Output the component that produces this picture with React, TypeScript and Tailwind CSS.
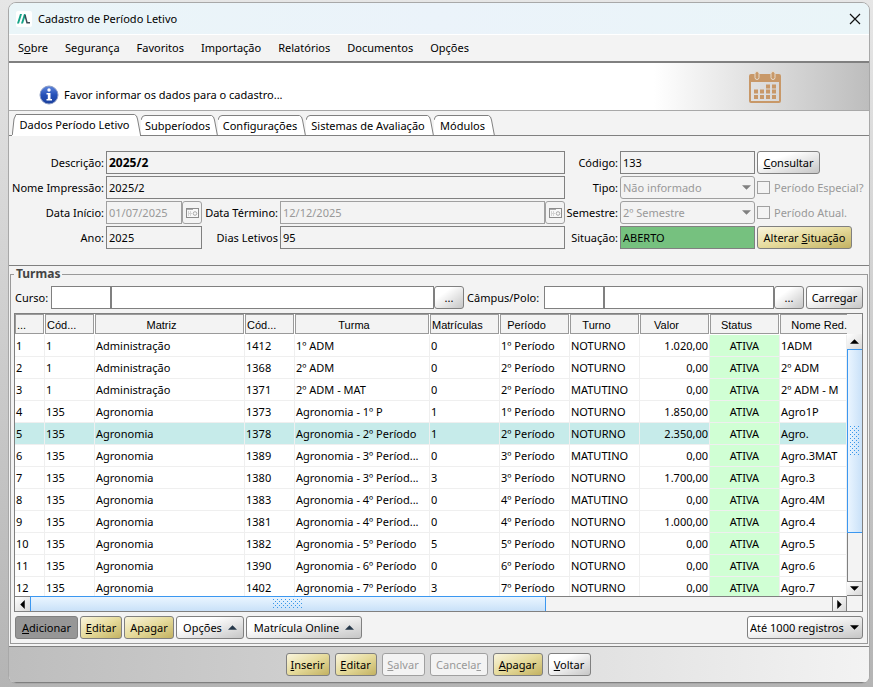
import type { ReactNode } from "react"
import clsx from "clsx"

const menus = ["Sobre", "Segurança", "Favoritos", "Importação", "Relatórios", "Documentos", "Opções"]

const tabs = [
  { label: "Dados Período Letivo", width: "w-[129px]" },
  { label: "Subperíodos", width: "w-[77px]" },
  { label: "Configurações", width: "w-[88px]" },
  { label: "Sistemas de Avaliação", width: "w-[128px]" },
  { label: "Módulos", width: "w-[61px]" },
]

const columns = [
  { title: "...", width: "w-[30px]", left: true },
  { title: "Cód...", width: "w-[50px]", left: true },
  { title: "Matriz", width: "w-[150px]" },
  { title: "Cód...", width: "w-[50px]", left: true },
  { title: "Turma", width: "w-[135px]" },
  { title: "Matrículas", width: "w-[70px]", left: true },
  { title: "Período", width: "w-[70px]" },
  { title: "Turno", width: "w-[70px]" },
  { title: "Valor", width: "w-[70px]" },
  { title: "Status", width: "w-[70px]" },
]

const turmas = [
  ["1", "Administração", "1412", "1º ADM", "0", "1º Período", "NOTURNO", "1.020,00", "1ADM"],
  ["1", "Administração", "1368", "2º ADM", "0", "2º Período", "NOTURNO", "0,00", "2º ADM"],
  ["1", "Administração", "1371", "2º ADM - MAT", "0", "2º Período", "MATUTINO", "0,00", "2º ADM - M"],
  ["135", "Agronomia", "1373", "Agronomia - 1º P", "1", "1º Período", "NOTURNO", "1.850,00", "Agro1P"],
  ["135", "Agronomia", "1378", "Agronomia - 2º Período", "1", "2º Período", "NOTURNO", "2.350,00", "Agro."],
  ["135", "Agronomia", "1389", "Agronomia - 3º Períod...", "0", "3º Período", "MATUTINO", "0,00", "Agro.3MAT"],
  ["135", "Agronomia", "1380", "Agronomia - 3º Períod...", "3", "3º Período", "NOTURNO", "1.700,00", "Agro.3"],
  ["135", "Agronomia", "1383", "Agronomia - 4º Períod...", "0", "4º Período", "MATUTINO", "0,00", "Agro.4M"],
  ["135", "Agronomia", "1381", "Agronomia - 4º Períod...", "0", "4º Período", "NOTURNO", "1.000,00", "Agro.4"],
  ["135", "Agronomia", "1382", "Agronomia - 5º Período", "5", "5º Período", "NOTURNO", "0,00", "Agro.5"],
  ["135", "Agronomia", "1390", "Agronomia - 6º Período", "0", "6º Período", "NOTURNO", "0,00", "Agro.6"],
  ["135", "Agronomia", "1402", "Agronomia - 7º Período", "3", "7º Período", "NOTURNO", "0,00", "Agro.7"],
]

const SELECTED = 4

const tones = {
  plain: "border-[#808080] bg-linear-to-br from-white from-30% to-[#c6c6c6]",
  gold: "border-[#808080] bg-linear-to-br from-[#f9f4dc] via-[#e6db9c] to-[#c3b261]",
  pressed: "border-[#808080] bg-[#969696]",
  off: "border-[#a0a0a0] bg-[#f3f3f3] text-[#999]",
}

const field = "h-[23px] w-full min-w-0 border border-[#808080] px-0.5 outline-none"

function Btn({ tone = "plain", width, disabled, children, label }: {
  tone?: keyof typeof tones
  width: string
  disabled?: boolean
  children: ReactNode
  label?: string
}) {
  return (
    <button
      type="button"
      disabled={disabled}
      aria-label={label}
      className={clsx("flex h-[23px] shrink-0 items-center justify-center whitespace-nowrap rounded-[3px] border", tones[tone], width)}
    >
      {children}
    </button>
  )
}

function Label({ id, children }: { id: string; children: ReactNode }) {
  return <label htmlFor={id} className="flex justify-end whitespace-nowrap">{children}</label>
}

function Arrow({ dir = "down", className = "text-black" }: { dir?: "up" | "down" | "left" | "right"; className?: string }) {
  const paths = { up: "M0 5L5 0L10 5Z", down: "M0 0H10L5 5Z", left: "M5 0V10L0 5Z", right: "M0 0V10L5 5Z" }
  const flat = dir === "up" || dir === "down"
  return (
    <svg className={clsx("shrink-0", className)} width={flat ? 9 : 5} height={flat ? 5 : 9} viewBox={flat ? "0 0 10 5" : "0 0 5 10"} fill="currentColor">
      <path d={paths[dir]} />
    </svg>
  )
}

// disabled combo box
function Combo({ id, value }: { id: string; value: string }) {
  return (
    <div className="relative">
      <select id={id} disabled className="h-[23px] w-full appearance-none rounded-[3px] border border-[#a0a0a0] bg-[#f3f3f3] px-0.5 text-[#999] opacity-100">
        <option>{value}</option>
      </select>
      <span className="pointer-events-none absolute inset-y-0 right-1 flex items-center"><Arrow className="text-[#808080]" /></span>
    </div>
  )
}

function DateField({ id, value }: { id: string; value: string }) {
  return (
    <div className="flex">
      <input id={id} disabled defaultValue={value} className="h-[23px] w-full min-w-0 flex-1 border border-[#a0a0a0] px-0.5 text-[#999]" />
      <Btn tone="off" disabled width="w-5" label="Abrir calendário">
        <svg width="13" height="10" viewBox="0 0 13 10" fill="none" stroke="#8c8c8c">
          <rect x="0.5" y="0.5" width="12" height="9" fill="#f8f8f8" />
          <path d="M1 1.5H7" stroke="#aaa" />
          <path d="M2.5 3V8M4.5 3V8M2 5.5H6" stroke="#d4d4d4" />
          <circle cx="9" cy="5.500" r="1.800" stroke="#aaa" />
        </svg>
      </Btn>
    </div>
  )
}

// speckled grip in the middle of a scroll thumb
function Grip({ id, width, height }: { id: string; width: number; height: number }) {
  return (
    <svg width={width} height={height}>
      <pattern id={id} width="4" height="4" patternUnits="userSpaceOnUse">
        <path d="M0 0h1v1h-1zM2 2h1v1h-1z" fill="#3b97e8" />
      </pattern>
      <rect width={width} height={height} fill={`url(#${id})`} />
    </svg>
  )
}

function Tab({ label, width, active }: { label: string; width: string; active: boolean }) {
  return (
    <button type="button" role="tab" aria-selected={active} className={clsx("flex items-stretch", active ? "h-[21px]" : "h-5", width)}>
      <svg className="shrink-0" width="4" height="21" viewBox="0 0 4 21">
        <path d={active ? "M0 21L2.500 4L4 .5V21Z" : "M0 21V4L1.500 1.500L4 .5V21Z"} fill="#fff" />
        <path d={active ? "M.3 21L2 5L4 .5" : "M0 5L1.500 1.500L4 .5"} fill="none" stroke="#808080" />
      </svg>
      <span className="flex flex-1 items-center justify-center whitespace-nowrap border-t border-[#808080] bg-white">{label}</span>
      <svg className="shrink-0" width="8" height="21" viewBox="0 0 8 21">
        <path d="M0 .5H2L4.500 4L7.500 21H0Z" fill="#fff" />
        <path d="M0 .5H1.500L3.500 2L4.500 5L7.500 21" fill="none" stroke="#808080" />
      </svg>
    </button>
  )
}

function Calendar() {
  const dots = [[16, 13], [22, 13], [4, 18], [10, 18], [16, 18], [22, 18], [4, 23.5], [10, 23.5], [16, 23.5], [22, 23.5]]
  return (
    <svg width="34" height="34" viewBox="0 0 34 34" fill="#c89868">
      <path fillRule="evenodd" d="M3 4H31Q33 4 33 6V31Q33 33 31 33H3Q1 33 1 31V6Q1 4 3 4ZM3 12V31H31V12Z" />
      {[7, 23].map((x) => (
        <rect key={x} x={x} y="1.500" width="4" height="8" rx="2" stroke="#e6dccf" />
      ))}
      {dots.map(([x, y]) => (
        <rect key={`${x}-${y}`} x={x + 2} y={y + 1.5} width="4" height="4" />
      ))}
    </svg>
  )
}

function TitleBar() {
  return (
    <header className="flex h-[31px] items-center bg-linear-to-r from-[#eaf5f8] via-[#ebf3fa] to-[#eaf5f8] pl-[7px] pr-2">
      <svg width="16" height="16" viewBox="0 0 16 16">
        <rect width="16" height="16" rx="2" fill="#fff" />
        <path d="M1 12.500L4 3H6L3 12.500ZM5 12.500L8 3H9.500V5L7 12.500Z" fill="#17a589" />
        <path d="M9 4L11 11.800H14" fill="none" stroke="#3d4b55" strokeWidth="1.500" />
      </svg>
      <h1 className="ml-1.5 flex-1">Cadastro de Período Letivo</h1>
      <button type="button" aria-label="Fechar">
        <svg width="12" height="12" viewBox="0 0 12 12" stroke="#111" strokeWidth="1.200"><path d="M1 1L11 11M11 1L1 11" /></svg>
      </button>
    </header>
  )
}

function DataPanel() {
  return (
    <section className="grid grid-cols-[95px_1fr_51px_135px_109px] items-center gap-0.5 border-b border-[#808080] pb-4 pr-[3px] pt-[15px]">
      <Label id="descricao">Descrição:</Label>
      <input id="descricao" defaultValue="2025/2" className={clsx(field, "text-[12px] font-bold")} />
      <Label id="codigo">Código:</Label>
      <input id="codigo" defaultValue="133" className={field} />
      <Btn width="w-[63px]"><span><u>C</u>onsultar</span></Btn>

      <Label id="impressao">Nome Impressão:</Label>
      <input id="impressao" defaultValue="2025/2" className={field} />
      <Label id="tipo">Tipo:</Label>
      <Combo id="tipo" value="Não informado" />
      <label className="flex items-center gap-1 whitespace-nowrap text-[#999]">
        <input type="checkbox" disabled className="size-[13px] appearance-none border border-[#a0a0a0]" />
        Período Especial?
      </label>

      <Label id="inicio">Data Início:</Label>
      <div className="grid grid-cols-[96px_74px_1fr] items-center gap-0.5">
        <DateField id="inicio" value="01/07/2025" />
        <Label id="termino">Data Término:</Label>
        <DateField id="termino" value="12/12/2025" />
      </div>
      <Label id="semestre">Semestre:</Label>
      <Combo id="semestre" value="2º Semestre" />
      <label className="flex items-center gap-1 whitespace-nowrap text-[#999]">
        <input type="checkbox" disabled className="size-[13px] appearance-none border border-[#a0a0a0]" />
        Período Atual.
      </label>

      <Label id="ano">Ano:</Label>
      <div className="grid grid-cols-[96px_74px_1fr] items-center gap-0.5">
        <input id="ano" defaultValue="2025" className={field} />
        <Label id="dias">Dias Letivos</Label>
        <input id="dias" defaultValue="95" className={field} />
      </div>
      <Label id="situacao">Situação:</Label>
      <input id="situacao" defaultValue="ABERTO" className={clsx(field, "bg-[#76c17f]")} />
      <Btn tone="gold" width="w-[95px]"><span>Alterar <u>S</u>ituação</span></Btn>
    </section>
  )
}

const cell = "overflow-hidden whitespace-nowrap border-b border-r border-[#efefef] px-px"
const scrollBtn = "flex size-[15px] shrink-0 items-center justify-center bg-linear-to-br from-white to-[#d8d8d8]"

function TurmasTable() {
  return (
    <div className="mt-1 border border-[#808080]">
      <div className="flex h-[282px]">
        <div className="min-w-0 flex-1 overflow-hidden bg-white">
          <table className="w-full table-fixed border-separate border-spacing-0">
            <thead>
              <tr className="h-[21px] align-top font-['Liberation_Sans',sans-serif]">
                {columns.map((c, i) => (
                  <th key={i} className={clsx("p-0 pr-px align-top font-normal", c.width)}>
                    <div className={clsx("h-5 border border-[#9a9a9a] bg-[#f3f3f3] leading-[20px]", c.left ? "pl-px text-left" : "pr-4 text-center")}>{c.title}</div>
                  </th>
                ))}
                <th className="p-0 align-top font-normal">
                  <div className="h-5 border-y border-l border-[#9a9a9a] bg-[#f3f3f3] text-right leading-[20px]">Nome Red.</div>
                </th>
              </tr>
            </thead>
            <tbody>
              {turmas.map(([cod, matriz, codTurma, turma, matriculas, periodo, turno, valor, nome], i) => (
                <tr key={codTurma} className={clsx("h-[22px]", i === SELECTED && "bg-[#c6ebea]")}>
                  <td className={cell}>{i + 1}</td>
                  <td className={cell}>{cod}</td>
                  <td className={cell}>{matriz}</td>
                  <td className={cell}>{codTurma}</td>
                  <td className={cell}>{turma}</td>
                  <td className={cell}>{matriculas}</td>
                  <td className={cell}>{periodo}</td>
                  <td className={cell}>{turno}</td>
                  <td className={clsx(cell, "text-right")}>{valor}</td>
                  <td className={clsx(cell, "bg-[#d0ffd4] text-center")}>ATIVA</td>
                  <td className={cell}>{nome}</td>
                </tr>
              ))}
            </tbody>
          </table>
        </div>
        <div className="flex w-[15px] flex-col pt-5">
          <div className={scrollBtn}><Arrow dir="up" /></div>
          <div className="flex flex-[15] items-center justify-center border-y border-l border-[#3b97f0] bg-linear-to-r from-[#eaf5ff] to-[#c9e1f8]">
            <Grip id="grip-v" width={10} height={30} />
          </div>
          <div className="flex-[4] border-l border-[#808080]" />
          <div className={clsx(scrollBtn, "border-y border-[#808080]")}><Arrow /></div>
        </div>
      </div>
      <div className="flex h-[15px]">
        <div className={clsx(scrollBtn, "border-t border-[#808080]")}><Arrow dir="left" /></div>
        <div className="flex flex-[9] items-center justify-center border-x border-t border-[#3b97f0] bg-linear-to-b from-[#eaf5ff] to-[#c9e1f8]">
          <Grip id="grip-h" width={30} height={10} />
        </div>
        <div className="flex-[5] border-t border-[#808080]" />
        <div className={clsx(scrollBtn, "border-x border-t border-[#808080]")}><Arrow dir="right" /></div>
        <div className="w-[15px]" />
      </div>
    </div>
  )
}

export default function App() {
  return (
    <div className="min-h-screen bg-linear-to-b from-[#e6e6e6] to-[#b4b4b4] pb-1 pl-2 pr-[3px] pt-0.5 font-['Noto_Sans','Open_Sans',sans-serif] text-[11px] leading-4 text-black">
      <main className="overflow-hidden rounded-lg border border-[#a8a8a8] bg-[#f3f3f3]">
        <TitleBar />

        <nav className="flex h-[29px] items-center gap-[17px] border-b-2 border-t border-b-[#808080] border-t-white pl-[9px]">
          {menus.map((m, i) => (
            <button key={m} type="button">{i === 0 ? <>S<u>o</u>bre</> : m}</button>
          ))}
        </nav>

        <div className="flex h-12 items-center border-b border-[#a8a8a8] bg-linear-to-r from-white from-75% to-[#bdbdbd]">
          <div className="flex flex-1 items-center gap-[5px] pl-[30px] pt-4">
            <svg width="20" height="20" viewBox="0 0 20 20">
              <defs>
                <linearGradient id="info" x1="0" y1="0" x2="0" y2="1">
                  <stop offset="0" stopColor="#5f86dc" />
                  <stop offset="0.500" stopColor="#2450b8" />
                  <stop offset="1" stopColor="#1a3f9c" />
                </linearGradient>
              </defs>
              <circle cx="10" cy="10" r="9" fill="url(#info)" stroke="#8c9cc4" />
              <circle cx="10" cy="5" r="1.700" fill="#fff" />
              <path d="M7.500 8H11.500V14H13V15.500H7.500V14H8.800V9.500H7.500Z" fill="#fff" />
            </svg>
            <p>Favor informar os dados para o cadastro...</p>
          </div>
          <span className="mr-[87px]"><Calendar /></span>
        </div>

        <div role="tablist" className="flex items-end pl-[3px] pt-[3px]">
          {tabs.map((t, i) => <Tab key={t.label} {...t} active={i === 0} />)}
        </div>
        <div className="flex h-px">
          <span className="w-[3px] bg-[#808080]" />
          <span className="w-[128px] bg-white" />
          <span className="flex-1 bg-[#808080]" />
        </div>

        <DataPanel />

        <fieldset className="mx-px border border-[#999] pb-1 pl-[3px] pr-1">
          <legend className="px-0.5 text-[12px] font-bold text-[#444]">Turmas</legend>
          <div className="flex items-center pt-1">
            <label htmlFor="curso" className="w-[37px] shrink-0 whitespace-nowrap pl-px">Curso:</label>
            <input id="curso" className="h-[23px] w-[60px] shrink-0 border border-[#808080] bg-white px-0.5" />
            <input aria-label="Nome do curso" className="h-[23px] w-0 flex-[29] border border-[#808080] bg-white px-0.5" />
            <Btn width="w-[30px]" label="Procurar curso">...</Btn>
            <label htmlFor="campus" className="w-20 shrink-0 whitespace-nowrap pl-[3px]">Câmpus/Polo:</label>
            <input id="campus" className="h-[23px] w-[60px] shrink-0 border border-[#808080] bg-white px-0.5" />
            <input aria-label="Nome do câmpus" className="h-[23px] w-0 flex-[15] border border-[#808080] bg-white px-0.5" />
            <Btn width="w-[30px]" label="Procurar câmpus">...</Btn>
            <div className="pl-0.5"><Btn width="w-[57px]">Carregar</Btn></div>
          </div>

          <TurmasTable />

          <div className="mt-1 flex gap-0.5 pl-px">
            <Btn tone="pressed" width="w-[63px]"><span><u>A</u>dicionar</span></Btn>
            <Btn tone="gold" width="w-[42px]"><span><u>E</u>ditar</span></Btn>
            <Btn tone="gold" width="w-[50px]">Apagar</Btn>
            <Btn width="w-[68px]"><span className="mr-1.5">Opções</span><Arrow dir="up" className="text-[#26384a]" /></Btn>
            <Btn width="w-[116px]"><span className="mr-1.5">Matrícula Online</span><Arrow dir="up" className="text-[#26384a]" /></Btn>
            <div className="relative ml-auto">
              <select aria-label="Limite de registros" className="h-[23px] w-[116px] appearance-none rounded-[3px] border border-[#808080] bg-linear-to-br from-white from-30% to-[#c6c6c6] px-0.5">
                <option>Até 1000 registros</option>
              </select>
              <span className="pointer-events-none absolute inset-y-0 right-1 flex items-center"><Arrow /></span>
            </div>
          </div>
        </fieldset>

        <footer className="mt-0.5 flex h-[37px] items-center justify-center gap-[5px] border-y border-[#808080] bg-linear-to-r from-[#bdbdbd] to-[#f3f3f3] pr-0.5">
          <Btn tone="gold" width="w-11"><span><u>I</u>nserir</span></Btn>
          <Btn tone="gold" width="w-[42px]"><span><u>E</u>ditar</span></Btn>
          <Btn tone="off" disabled width="w-[43px]"><span><u>S</u>alvar</span></Btn>
          <Btn tone="off" disabled width="w-[58px]"><span>Cancela<u>r</u></span></Btn>
          <Btn tone="gold" width="w-[50px]"><span><u>A</u>pagar</span></Btn>
          <Btn width="w-[43px]"><span><u>V</u>oltar</span></Btn>
        </footer>
      </main>
    </div>
  )
}
